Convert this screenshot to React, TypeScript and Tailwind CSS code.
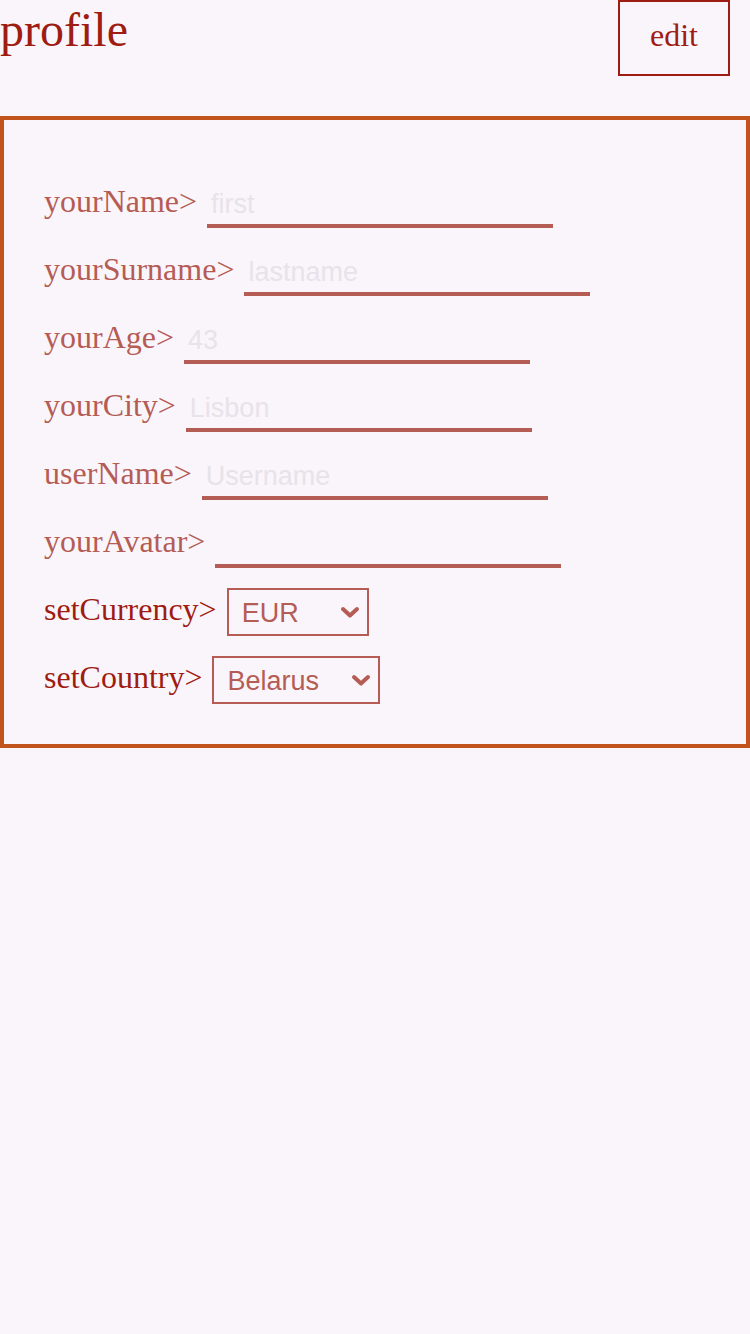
import React, { useState } from 'react';

const fields = [
  { label: 'yourName>', placeholder: 'first' },
  { label: 'yourSurname>', placeholder: 'lastname' },
  { label: 'yourAge>', placeholder: '43' },
  { label: 'yourCity>', placeholder: 'Lisbon' },
  { label: 'userName>', placeholder: 'Username' },
  { label: 'yourAvatar>', placeholder: '' },
];

const Chevron = () => (
  <svg width="20" height="14" viewBox="0 0 20 14" className="pointer-events-none absolute right-[9px] top-1/2 -translate-y-1/2">
    <path d="M3 4 L10 10.5 L17 4" fill="none" stroke="#b55c55" strokeWidth="4" strokeLinecap="round" strokeLinejoin="round" />
  </svg>
);

const App = () => {
  const [currency, setCurrency] = useState('EUR');
  const [country, setCountry] = useState('Belarus');

  return (
    <div className="min-h-[1334px] bg-[#faf5fa] font-['Liberation_Serif',serif]">
      <div className="flex items-start justify-between pr-[20px]">
        <h1 className="text-[48px] leading-[60px] text-[#9e1c12]">profile</h1>
        <button className="w-[112px] h-[76px] border-2 border-[#9e1c12] pb-[6px] text-[32px] text-[#9e1c12]">edit</button>
      </div>

      <div className="mt-[40px] border-4 border-[#c2531a] pl-[40px] pt-[60px] pb-[40px] flex flex-col gap-[20px]">
        {fields.map((f) => (
          <div key={f.label} className="flex items-center gap-[10px]">
            <span className="relative -top-[3px] text-[32px] leading-[40px] text-[#b55c55]">{f.label}</span>
            <input
              type="text"
              placeholder={f.placeholder}
              className="w-[346px] h-[48px] border-b-4 border-[#b55c55] bg-transparent px-[4px] pt-[4px] font-['Liberation_Sans',sans-serif] text-[27px] text-[#b55c55] outline-none placeholder:text-[#e8e2ea]"
            />
          </div>
        ))}

        <div className="flex items-center gap-[10px]">
          <span className="relative -top-[3px] text-[32px] leading-[40px] text-[#9e1c12]">setCurrency&gt;</span>
          <div className="relative">
            <select
              value={currency}
              onChange={(e) => setCurrency(e.target.value)}
              className="w-[142px] h-[48px] appearance-none border-2 border-[#b55c55] bg-transparent pl-[13px] pt-[2px] font-['Liberation_Sans',sans-serif] text-[27px] text-[#b55c55] outline-none"
            >
              <option>EUR</option>
              <option>USD</option>
              <option>GBP</option>
            </select>
            <Chevron />
          </div>
        </div>

        <div className="flex items-center gap-[10px]">
          <span className="relative -top-[3px] text-[32px] leading-[40px] text-[#9e1c12]">setCountry&gt;</span>
          <div className="relative">
            <select
              value={country}
              onChange={(e) => setCountry(e.target.value)}
              className="w-[168px] h-[48px] appearance-none border-2 border-[#b55c55] bg-transparent pl-[13px] pt-[2px] font-['Liberation_Sans',sans-serif] text-[27px] text-[#b55c55] outline-none"
            >
              <option>Belarus</option>
              <option>Portugal</option>
              <option>Poland</option>
            </select>
            <Chevron />
          </div>
        </div>
      </div>
    </div>
  );
};

export default App;
